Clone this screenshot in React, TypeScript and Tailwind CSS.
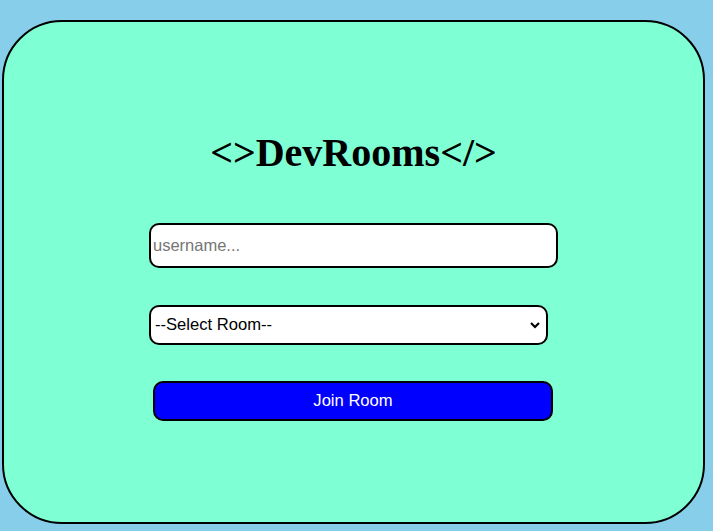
export default function App() {
  return (
    <div className="min-h-[531px] bg-[#87ceeb] pt-5 font-['Liberation_Sans',Arial,sans-serif]">
      <div className="ml-[2px] flex h-[504px] w-[703px] flex-col items-center rounded-[60px] border-2 border-black bg-[#7fffd4]">
        <h1 className="mt-[111px] font-['Liberation_Serif','Times_New_Roman',serif] text-[40px] font-bold leading-none text-black">
          &lt;&gt;DevRooms&lt;/&gt;
        </h1>
        <div className="mt-[50px] flex w-[409px] flex-col items-start">
          <input
            type="text"
            placeholder="username..."
            className="h-[45px] w-[409px] rounded-[10px] border-2 border-black bg-white px-[2px] text-[16.5px] text-black outline-none placeholder:text-[#757575]"
          />
          <div className="relative mt-[37px] h-[40px] w-[399px] rounded-[10px] border-2 border-black bg-white">
            <select className="h-full w-full appearance-none bg-transparent pl-[4px] text-[16.6px] text-black outline-none">
              <option>--Select Room--</option>
            </select>
            <svg
              className="pointer-events-none absolute right-[5px] top-[13px]"
              width="12"
              height="10"
              viewBox="0 0 12 10"
            >
              <path d="M2 3 L6 7 L10 3" fill="none" stroke="black" strokeWidth="2.2" />
            </svg>
          </div>
          <button className="ml-[4px] mt-[36px] h-[40px] w-[400px] rounded-[10px] border-2 border-black bg-[#0000ff] text-[16.6px] text-white">
            Join Room
          </button>
        </div>
      </div>
    </div>
  );
}
